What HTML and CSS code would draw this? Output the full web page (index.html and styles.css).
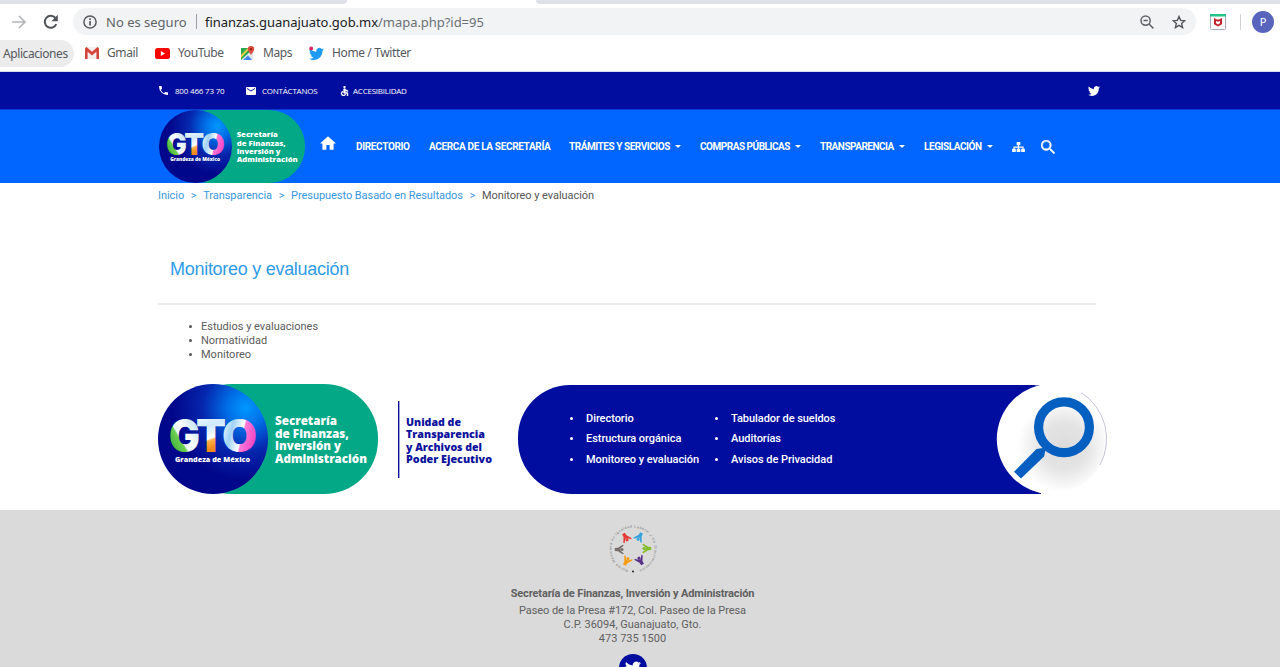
FILE: index.html
```html
<!DOCTYPE html>
<html lang="es">
<head>
<meta charset="utf-8">
<title>Monitoreo y evaluación</title>
<link rel="stylesheet" href="styles.css">
</head>
<body>
<svg class="defs" width="0" height="0" aria-hidden="true">
  <defs>
    <radialGradient id="globe" gradientUnits="userSpaceOnUse" cx="88" cy="24" r="72">
      <stop offset="0" stop-color="#0098ff"/><stop offset=".25" stop-color="#0070e8"/><stop offset=".6" stop-color="#0527ae"/><stop offset="1" stop-color="#01078b"/>
    </radialGradient>
    <linearGradient id="gG" x1=".05" y1=".9" x2=".8" y2=".1">
      <stop offset="0" stop-color="#2f9d3a"/><stop offset=".4" stop-color="#6bd04e"/><stop offset=".44" stop-color="#e8f5ff"/><stop offset=".6" stop-color="#fff"/><stop offset="1" stop-color="#b5dcf8"/>
    </linearGradient>
    <linearGradient id="gT" x1="0" y1="0" x2=".2" y2="1">
      <stop offset="0" stop-color="#fff"/><stop offset=".4" stop-color="#cfe9fb"/><stop offset=".62" stop-color="#fff"/><stop offset=".66" stop-color="#ffb24a"/><stop offset=".8" stop-color="#f08a1c"/>
    </linearGradient>
    <linearGradient id="gO" x1="0" y1=".2" x2="1" y2=".6">
      <stop offset="0" stop-color="#fff"/><stop offset=".3" stop-color="#9fd2f7"/><stop offset=".58" stop-color="#fff"/><stop offset=".62" stop-color="#ff7ad8"/><stop offset="1" stop-color="#f03cc0"/>
    </linearGradient>
    <radialGradient id="shade"><stop offset="0" stop-color="#dcdcdc"/><stop offset=".5" stop-color="#e4e4e4"/><stop offset="1" stop-color="#fff"/></radialGradient>
    <symbol id="bird" viewBox="0 0 24 24"><path d="M23.95 4.57a10 10 0 0 1-2.82.77 4.96 4.96 0 0 0 2.16-2.72c-.95.55-2 .95-3.13 1.18a4.92 4.92 0 0 0-8.38 4.48C7.69 8.1 4.07 6.13 1.64 3.16a4.93 4.93 0 0 0 1.52 6.57 4.9 4.9 0 0 1-2.23-.61v.06a4.92 4.92 0 0 0 3.95 4.83 5 5 0 0 1-2.21.08 4.94 4.94 0 0 0 4.6 3.42A9.87 9.87 0 0 1 0 19.54a14 14 0 0 0 7.55 2.21c9.05 0 14-7.5 14-13.98 0-.21 0-.42-.02-.63a9.94 9.94 0 0 0 2.42-2.57z"/></symbol>
    <symbol id="gto" viewBox="0 0 220 110">
      <rect x="20" width="200" height="110" rx="54" fill="#03a887"/>
      <circle cx="55" cy="55" r="55" fill="url(#globe)"/>
      <g class="gto-letters">
        <text x="11" y="68" textLength="31" lengthAdjust="spacingAndGlyphs" fill="url(#gG)">G</text>
        <text x="38" y="68" textLength="30" lengthAdjust="spacingAndGlyphs" fill="url(#gT)">T</text>
        <text x="64" y="68" textLength="35" lengthAdjust="spacingAndGlyphs" fill="url(#gO)">O</text>
      </g>
      <text class="gto-motto" x="17" y="77.5" textLength="75" lengthAdjust="spacingAndGlyphs">Grandeza de México</text>
      <g class="gto-name">
        <text x="117" y="41" textLength="62" lengthAdjust="spacingAndGlyphs">Secretaría</text>
        <text x="117" y="53.5" textLength="74" lengthAdjust="spacingAndGlyphs">de Finanzas,</text>
        <text x="117" y="66" textLength="66" lengthAdjust="spacingAndGlyphs">Inversión y</text>
        <text x="117" y="78.5" textLength="92" lengthAdjust="spacingAndGlyphs">Administración</text>
      </g>
    </symbol>
    <symbol id="person" viewBox="-7 -7 14 14" overflow="visible"><circle cx="3.2" cy="0" r="2"/><path d="M-6-2L-2-2.2 4-6 5.5-5 1.2-1.2 1.2 1.2 5.500 5 4 6-2 2.200-6 2z"/></symbol>
  </defs>
</svg>

<div class="tabstrip"><div class="tab-left"></div><div class="tab-right"></div></div>
<div class="toolbar">
  <svg class="fwd" width="16" height="16" viewBox="0 0 16 16" fill="none" stroke="#b4b6b9" stroke-width="1.7"><path d="M1 8h13M8 2l6 6-6 6"/></svg>
  <svg class="reload" width="16" height="16" viewBox="0 0 16 16"><path d="M13.3 10.2A6 6 0 1 1 12.4 4" fill="none" stroke="#505357" stroke-width="2"/><path d="M14.8.8v6.4H8.4z" fill="#505357"/></svg>
  <div class="omnibox">
    <svg width="14" height="14" viewBox="0 0 14 14"><circle cx="7" cy="7" r="6.1" fill="none" stroke="#56595d" stroke-width="1.5"/><path d="M6.2 6h1.7v4.5H6.2zM6.2 3.3h1.7v1.6H6.2z" fill="#56595d"/></svg>
    <span class="insecure">No es seguro</span><span class="omni-sep"></span>
    <span class="url"><b>finanzas.guanajuato.gob.mx</b>/mapa.php?id=95</span>
    <svg class="zoom-out" width="14" height="14" viewBox="0 0 14 14" fill="none" stroke="#626569" stroke-width="1.5"><circle cx="5.6" cy="5.6" r="4.6"/><path d="M9 9l4.4 4.4M3.4 5.6h4.4"/></svg>
    <svg class="star" width="14" height="14" viewBox="0 0 24 24"><path d="M12 2.5l2.8 6.7 7.2.6-5.5 4.7 1.7 7.1-6.2-3.8-6.2 3.8 1.7-7.1L2 9.8l7.2-.6z" fill="none" stroke="#505357" stroke-width="2.3"/></svg>
  </div>
  <svg class="shield" width="16" height="16" viewBox="0 0 16 16"><rect x=".5" y=".5" width="15" height="15" rx="1" fill="#fff" stroke="#a9abb8"/><path d="M0 0h16v2.5H0z" fill="#22c487"/><path d="M4 4l3 1.4h2L12 4v6.2L8 12.6 4 10.2z" fill="#c4232d"/><path d="M6 7l1 .6h2l1-.6v2.3l-2 1.1-2-1.1z" fill="#fff"/></svg>
  <span class="tool-sep"></span>
  <span class="avatar">P</span>
</div>
<div class="bookmarks">
  <span class="apps">Aplicaciones</span>
  <svg class="bm-gmail" width="14" height="12" viewBox="0 0 14 12"><path d="M0 0h14v12H0z" fill="#f1eeee"/><path d="M0 1.2L1.5 0 7 4.8 12.5 0 14 1.2V12h-2.6V4.7L7 8.4 2.6 4.7V12H0z" fill="#d6453a"/></svg>
  <span class="w-gmail">Gmail</span>
  <svg width="15" height="11" viewBox="0 0 15 11"><rect width="15" height="11" rx="2.5" fill="#f00"/><path d="M5.8 3l4.2 2.5L5.8 8z" fill="#fff"/></svg>
  <span class="w-yt">YouTube</span>
  <svg width="15" height="15" viewBox="0 0 15 15"><path d="M1 2h12v12H1z" fill="#2da94f"/><path d="M1 14L13 3v11z" fill="#e3e6e8"/><path d="M3 14l5-4.5 4 4.5z" fill="#4285f4"/><path d="M1 9l7-7h2L1 12z" fill="#fbd04b"/><path d="M11 9C10 6.5 7.8 5.6 7.8 3.2a3.2 3.2 0 0 1 6.4 0C14.200 5.600 12 6.500 11 9z" fill="#dd4b3e"/><circle cx="11" cy="3.100" r="1.100" fill="#8c2018"/></svg>
  <span class="w-maps">Maps</span>
  <svg width="15" height="15" viewBox="0 0 15 15"><svg y="0" width="15" height="16" fill="#1d9bf0"><use href="#bird"/></svg><circle cx="2.200" cy="2.400" r="1.900" fill="#e0245e"/></svg>
  <span class="w-home">Home / Twitter</span>
</div>

<div class="topbar"><div class="container topbar-in">
  <svg class="phone" width="9" height="9" viewBox="3 3 18 18" fill="#fff"><path d="M6.620 10.790a15 15 0 0 0 6.590 6.590l2.200-2.200a1 1 0 0 1 1.020-.24 11.400 11.400 0 0 0 3.570.57 1 1 0 0 1 1 1V20a1 1 0 0 1-1 1A17 17 0 0 1 3 4a1 1 0 0 1 1-1h3.500a1 1 0 0 1 1 1c0 1.250.2 2.450.57 3.570a1 1 0 0 1-.25 1.020z"/></svg>
  <span class="w-phone">800 466 73 70</span>
  <svg width="10" height="8" viewBox="2 4 20 16" fill="#fff"><path d="M20 4H4a2 2 0 0 0-2 2v12a2 2 0 0 0 2 2h16a2 2 0 0 0 2-2V6a2 2 0 0 0-2-2zm0 4l-8 5-8-5V6l8 5 8-5z"/></svg>
  <span class="w-contact">CONTÁCTANOS</span>
  <svg width="9" height="10" viewBox="4 2 16 20" fill="#fff" stroke="#fff" stroke-width=".8"><circle cx="12" cy="4" r="2"/><path d="M19 13v-2c-1.540.02-3.090-.75-4.070-1.830l-1.290-1.430A2 2 0 0 0 12 7a2 2 0 0 0-2 2v6a2 2 0 0 0 2 2h5v5h2v-5.500a2 2 0 0 0-2-2h-3v-3.450c1.290 1.070 3.250 1.940 5 1.950zm-6.170 5A3 3 0 1 1 9 14.170V12.100A5 5 0 1 0 14.900 18z"/></svg>
  <span class="w-access">ACCESIBILIDAD</span>
  <svg class="top-bird" width="12" height="12" fill="#fff"><use href="#bird"/></svg>
</div></div>

<div class="nav"><div class="container nav-in">
  <svg class="nav-logo" width="146" height="73"><use href="#gto"/></svg>
  <svg class="home" width="16" height="14" viewBox="2 3 20 17" fill="#fff"><path d="M10 20v-6h4v6h5v-8h3L12 3 2 12h3v8z"/></svg>
  <span class="nav-item n1">DIRECTORIO</span>
  <span class="nav-item n2">ACERCA DE LA SECRETARÍA</span>
  <span class="nav-item n3">TRÁMITES Y SERVICIOS<i class="caret"></i></span>
  <span class="nav-item n4">COMPRAS PÚBLICAS<i class="caret"></i></span>
  <span class="nav-item n5">TRANSPARENCIA<i class="caret"></i></span>
  <span class="nav-item n6">LEGISLACIÓN<i class="caret"></i></span>
  <svg class="sitemap" width="13" height="10" viewBox="0 0 14 11" fill="#fff"><path d="M5 0h4v3.500H7.600V5H12.600v2.500H14V11h-4V7.500h1.400V6.200H7.600v1.300H9V11H5V7.500h1.400V6.200H2.600v1.300H4V11H0V7.500h1.400V5h5V3.500H5z"/></svg>
  <svg class="search" width="14" height="14" viewBox="3 3 17.500 17.500" fill="#fff" stroke="#fff" stroke-width=".5"><path d="M15.500 14h-.79l-.28-.27A6.470 6.470 0 0 0 16 9.500 6.500 6.500 0 1 0 9.500 16c1.610 0 3.090-.59 4.230-1.570l.27.28v.79l5 4.990L20.490 19zm-6 0a4.500 4.500 0 1 1 0-9 4.500 4.500 0 0 1 0 9z"/></svg>
</div></div>

<main class="container">
  <div class="crumbs"><a>Inicio</a><a class="gt">&gt;</a><a>Transparencia</a><a class="gt">&gt;</a><a>Presupuesto Basado en Resultados</a><a class="gt">&gt;</a><span>Monitoreo y evaluación</span></div>
  <h1 class="title">Monitoreo y evaluación</h1>
  <ul class="links"><li>Estudios y evaluaciones</li><li>Normatividad</li><li>Monitoreo</li></ul>
  <div class="banner">
    <svg width="220" height="110"><use href="#gto"/></svg>
    <svg class="unit" width="100" height="78" viewBox="0 0 100 78"><path d="M.7 0v77" stroke="#0d129c" stroke-width="1.400"/>
      <text x="8" y="24.500" textLength="55" lengthAdjust="spacingAndGlyphs">Unidad de</text><text x="8" y="37" textLength="79" lengthAdjust="spacingAndGlyphs">Transparencia</text><text x="8" y="49.500" textLength="76" lengthAdjust="spacingAndGlyphs">y Archivos del</text><text x="8" y="62" textLength="86" lengthAdjust="spacingAndGlyphs">Poder Ejecutivo</text></svg>
    <div class="pill">
      <ul class="pill-list col1"><li>Directorio</li><li>Estructura orgánica</li><li>Monitoreo y evaluación</li></ul>
      <ul class="pill-list"><li>Tabulador de sueldos</li><li>Auditorías</li><li>Avisos de Privacidad</li></ul>
      <svg class="lens" width="112" height="110" viewBox="0 0 112 110">
        <circle cx="56" cy="55" r="55.200" fill="#fff"/><clipPath id="lc"><circle cx="56" cy="55" r="54.500"/></clipPath>
        <ellipse cx="68" cy="62" rx="46" ry="46" fill="url(#shade)" clip-path="url(#lc)"/>
        <path d="M85 8.500A54.800 54.800 0 0 1 104 81" fill="none" stroke="#8a8db5" stroke-width=".5"/>
        <circle cx="68" cy="43.300" r="25.400" fill="none" stroke="#055fc0" stroke-width="9.200"/>
        <path d="M40.500 65l6.500-1 2.500 2.300-1.500 6.200L25 94.500 18 87.700z" fill="#055fc0"/>
      </svg>
    </div>
  </div>
</main>

<footer class="footer">
  <svg class="emblem" width="50" height="50" viewBox="-25 -25 50 50">
    <path id="ring" d="M-5 21A21.500 21.500 0 1 1 5 21" fill="none"/>
    <text class="ring-text"><textPath href="#ring" textLength="123">Norma Mexicana en Igualdad Laboral y No Discriminación</textPath></text>
    <circle cy="22.500" r="1" fill="#222"/>
    <g>
      <g transform="rotate(0) translate(14 0) rotate(180)" fill="#82bd2b"><use href="#person" x="-5" y="-5" width="11" height="11"/></g>
      <g transform="rotate(60) translate(14 0) rotate(180)" fill="#58308a"><use href="#person" x="-5" y="-5" width="11" height="11"/></g>
      <g transform="rotate(120) translate(14 0) rotate(180)" fill="#f59b12"><use href="#person" x="-5" y="-5" width="11" height="11"/></g>
      <g transform="rotate(180) translate(14 0) rotate(180)" fill="#77706a"><use href="#person" x="-5" y="-5" width="11" height="11"/></g>
      <g transform="rotate(240) translate(14 0) rotate(180)" fill="#e43b35"><use href="#person" x="-5" y="-5" width="11" height="11"/></g>
      <g transform="rotate(300) translate(14 0) rotate(180)" fill="#37a3dc"><use href="#person" x="-5" y="-5" width="11" height="11"/></g>
    </g>
  </svg>
  <strong class="f0">Secretaría de Finanzas, Inversión y Administración</strong>
  <span class="f1">Paseo de la Presa #172, Col. Paseo de la Presa</span>
  <span>C.P. 36094, Guanajuato, Gto.</span>
  <span>473 735 1500</span>
  <span class="social"><svg width="16" height="16" fill="#fff"><use href="#bird"/></svg></span>
</footer>
</body>
</html>
```
FILE: styles.css
```css
* { box-sizing: border-box; }
html, body { height: 667px; overflow: hidden; }
body { margin: 0; background: #fff; font: 11px/14px Roboto, "Liberation Sans", sans-serif; color: #5c5c5c; white-space: nowrap; }
svg { display: block; flex: none; }
.defs { position: absolute; }
ul { list-style: none; margin: 0; padding: 0; }
.container { width: 950px; margin-left: 158px; }

.tabstrip { height: 4px; display: flex; justify-content: space-between; }
.tab-left { width: 347px; background: #dee1e6; border-bottom-right-radius: 5px; }
.tab-right { width: 744px; background: #dee1e6; border-bottom-left-radius: 5px; }
.toolbar { height: 35px; display: flex; align-items: center; padding: 0 6px 0 11px; font: 13px/20px "Noto Sans", sans-serif; }
.reload { margin-left: 16px; margin-right: 14px; }
.omnibox { width: 1124px; height: 27px; border-radius: 14px; background: #f1f3f4; display: flex; align-items: center; padding: 0 10px; color: #5f6368; }
.insecure { width: 82px; margin-left: 9px; }
.omni-sep { width: 1px; height: 15px; margin: 0 8px; background: #9b9ea2; }
.url { letter-spacing: -.04px; color: #6c7074; }
.url b { font-weight: 400; color: #202124; }
.zoom-out { margin-left: auto; margin-right: 18px; }
.shield { margin-left: 14px; }
.tool-sep { width: 1px; height: 16px; margin: 0 11px 0 14px; background: #d0d2d5; }
.avatar { width: 22px; height: 22px; border-radius: 50%; background: #5965bd; color: #fff; font-size: 11px; line-height: 22px; text-align: center; }
.bookmarks { height: 33px; border-bottom: 1px solid #d5dcf0; display: flex; align-items: center; padding-bottom: 4px; font: 12px/18px "Noto Sans", sans-serif; color: #56595d; }
.apps { width: 74px; height: 27px; line-height: 27px; padding-left: 3px; margin-right: 11px; border-radius: 0 14px 14px 0; background: #ececec; letter-spacing: -.42px; }
.w-gmail { width: 48px; margin-left: 8px; letter-spacing: -.4px; }
.w-yt { width: 62px; margin-left: 8px; letter-spacing: -.4px; }
.w-maps { width: 46px; margin-left: 8px; letter-spacing: -.4px; }
.w-home { margin-left: 8px; letter-spacing: -.38px; }

.topbar { height: 38px; background: #000d9f; border-bottom: 1px solid #0c3bd0; color: #fff; font: 500 8px/12px "Open Sans", sans-serif; }
.topbar-in { height: 37px; display: flex; align-items: center; }
.phone { margin-left: 1px; }
.w-phone { width: 71px; margin-left: 7px; letter-spacing: -.2px; }
.w-contact { width: 78px; margin-left: 6px; letter-spacing: -.23px; }
.w-access { margin-left: 4px; letter-spacing: -.23px; }
.top-bird { margin-left: auto; margin-right: 8px; }

.nav { height: 73px; background: #06f; color: #fff; }
.nav-in { height: 73px; display: flex; align-items: center; }
.nav-logo { margin-left: 1px; }
.home { margin: -7px 20px 0 15px; }
.nav-item { display: flex; align-items: center; font: 700 10px/14px Roboto, sans-serif; letter-spacing: -.34px; padding-top: 1px; }
.n1 { width: 73px; }
.n2 { width: 140px; }
.n3 { width: 131px; letter-spacing: -.46px; }
.n4 { width: 120px; letter-spacing: -.48px; }
.n5 { width: 104px; letter-spacing: -.5px; }
.n6 { width: 88px; letter-spacing: -.44px; }
.caret { border: 3px solid transparent; border-top-color: #fff; border-bottom: 0; margin: -2px 0 0 5px; }
.search { margin-left: 16px; }

.crumbs { height: 25px; display: flex; align-items: center; color: #555; letter-spacing: -.05px; }
.crumbs a { color: #3797dc; }
.crumbs .gt { width: 19px; text-align: center; }
.title { margin: 0; height: 97px; border-bottom: 2px solid #ececec; width: 938px; padding: 51px 0 0 12px; font: 400 18px/20px "Liberation Sans", sans-serif; letter-spacing: -.28px; color: #2f9ce6; }
.links { padding: 15px 0 0 43px; }
.links li::before { content: ""; display: inline-block; width: 3px; height: 3px; border-radius: 50%; background: #555; margin: 0 9px 2px -12px; }
.banner { display: flex; margin-top: 22px; height: 110px; }
.unit { margin: 17px 20px 0 20px; }
.unit text { font: 800 11px "Open Sans", sans-serif; fill: #0d129c; }
.pill { width: 590px; height: 109px; margin-top: 1px; border-radius: 52px 0 0 54px; background: linear-gradient(90deg, #000d9f 523px, transparent 523px); display: flex; color: #fff; padding: 24px 0 0 68px; }
.pill-list { line-height: 20.300px; font-weight: 500; letter-spacing: -.05px; }
.col1 { width: 145px; }
.pill-list li::before { content: ""; display: inline-block; width: 3px; height: 3px; border-radius: 50%; background: #fff; margin: 0 13px 2px -16px; }
.lens { margin: -25px 0 0 auto; }

.footer { height: 157px; margin-top: 16px; background: #dadada; display: flex; flex-direction: column; align-items: center; padding: 14px 15px 0 0; overflow: hidden; color: #606060; }
.f0 { margin: 13px 0 3px; font-weight: 700; letter-spacing: -.13px; }
.f1 { letter-spacing: -.06px; }
.social { width: 28px; height: 28px; margin-top: 8px; border-radius: 50%; background: #000d9f; display: flex; align-items: center; justify-content: center; flex: none; }
.ring-text { font: 3.500px "Liberation Sans", sans-serif; fill: #777; }
.gto-letters { font: 900 45px Inter, sans-serif; }
.gto-motto { font: 800 7.500px "Open Sans", sans-serif; fill: #fff; }
.gto-name { font: 800 11.500px "Open Sans", sans-serif; fill: #fff; }
```
